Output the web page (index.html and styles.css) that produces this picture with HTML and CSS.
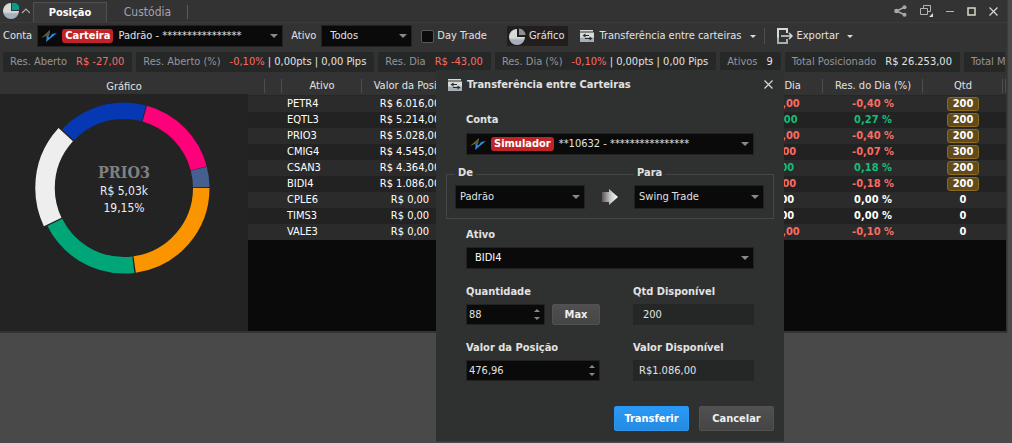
FILE: index.html
```
<!DOCTYPE html>
<html lang="pt-BR">
<head>
<meta charset="utf-8">
<title>Posição</title>
<link rel="stylesheet" href="styles.css">
</head>
<body>
<svg class="defs" aria-hidden="true">
  <defs>
    <linearGradient id="silver" x1="0" y1="0" x2="0" y2="1">
      <stop offset="0.55" stop-color="#d5dcd6"/><stop offset="0.7" stop-color="#a4afba"/>
    </linearGradient>
    <linearGradient id="fade" x1="0" y1="0" x2="1" y2="0">
      <stop offset="0" stop-color="#5a545a"/><stop offset="0.5" stop-color="#c4c4c4"/><stop offset="1" stop-color="#ffffff"/>
    </linearGradient>
    <symbol id="transfer" viewBox="0 0 14 12">
      <path d="M0 0h13v1.500H0zM0 2.500h14V12H0z" fill="url(#silver)"/>
      <path d="M4 5.500h5M5 8.500h6" fill="none" stroke="#2a2a2a" stroke-width="1.200"/>
      <path d="M2.500 5.500L5.500 3.500v4zM12.500 8.500L9.500 6.500v4z" fill="#2a2a2a"/>
    </symbol>
    <symbol id="brand" viewBox="0 0 16 12">
      <path d="M0 8L9 0L8 6L5 6z" fill="#75621f"/>
      <path d="M9 0L8 6L6 9L5 5z" fill="#4b5c55"/>
      <path d="M5 12L6 6L8.500 7.500L11 4L16 3z" fill="#2c8be8"/>
    </symbol>
    <symbol id="close" viewBox="0 0 9 9">
      <path d="M0.500 0.500L8.500 8.500M8.500 0.500L0.500 8.500" stroke="#d4d9d0" stroke-width="1.200" fill="none"/>
    </symbol>
  </defs>
</svg>

<main class="window">
  <header class="titlebar">
    <button class="app" aria-label="Menu">
      <svg width="27" height="18" viewBox="0 0 27 18"><path d="M8 1A8 8 0 1 0 16 9H8z" fill="url(#silver)"/><path d="M9 1H13L16 4V8H9z" fill="#0a9c88"/><path d="M19 11l4-4 4 4" fill="none" stroke="#aaa" stroke-width="1.200"/></svg>
    </button>
    <nav class="tabs">
      <button class="tab active">Posição</button>
      <button class="tab">Custódia</button>
    </nav>
    <div class="controls">
      <button aria-label="Compartilhar"><svg width="13" height="12" viewBox="0 0 13 12"><path d="M11 2L2.500 6L11 10" fill="none" stroke="#a7a7a7" stroke-width="1.500"/><g fill="#a7a7a7"><circle cx="2.500" cy="6" r="2.300"/><circle cx="10.500" cy="2.300" r="2"/><circle cx="10.500" cy="9.700" r="2"/></g></svg></button>
      <button aria-label="Duplicar"><svg width="13" height="12" viewBox="0 0 13 12"><path d="M3.500 3V.5h7v6H8M.5 3.500h7v6h-7z" fill="none" stroke="#b0b4b4"/><path d="M13 8v4H9z" fill="#ddd"/></svg></button>
      <button aria-label="Minimizar"><svg width="8" height="9" viewBox="0 0 8 9"><path d="M0 4.500h8" stroke="#b0b4b0"/></svg></button>
      <button aria-label="Maximizar"><svg width="9" height="9" viewBox="0 0 9 9"><path d="M1 1h7v7H1z" fill="none" stroke="#d4dccc" stroke-width="1.500"/></svg></button>
      <button aria-label="Fechar"><svg width="9" height="9"><use href="#close"/></svg></button>
    </div>
  </header>

  <div class="toolbar">
    <span id="acct">Conta</span>
    <button class="picker main-picker" aria-haspopup="listbox" aria-labelledby="acct">
      <svg width="16" height="12"><use href="#brand"/></svg>
      <span class="pill">Carteira</span><span>Padrão - ****************</span>
    </button>
    <label for="asset-filter">Ativo</label>
    <span class="select filter"><select id="asset-filter"><option>Todos</option></select></span>
    <label class="check"><input type="checkbox">Day Trade</label>
    <button class="tool pressed"><svg width="17" height="17" viewBox="0 0 17 17"><path d="M8 1A8 8 0 1 0 16 9H8z" fill="url(#silver)"/><path d="M10 0.500A7 7 0 0 1 16.500 7H10z" fill="#8f8f93"/></svg>Gráfico</button>
    <button class="tool move"><svg width="14" height="12"><use href="#transfer"/></svg>Transferência entre carteiras<i class="caret"></i></button>
    <button class="tool export"><svg width="16" height="16" viewBox="0 0 16 16"><path d="M10 5V1H1v14h9v-4" fill="none" stroke="url(#silver)" stroke-width="2"/><path d="M4 8h11M12 5l3 3-3 3" fill="none" stroke="#d5dcd6" stroke-width="1.500"/></svg>Exportar<i class="caret"></i></button>
  </div>

  <section class="cards">
    <div class="card"><span>Res. Aberto</span><b class="neg">R$ -27,00</b></div>
    <div class="card"><span>Res. Aberto (%)</span><b><em class="neg">-0,10%</em> | 0,00pts | 0,00 Pips</b></div>
    <div class="card"><span>Res. Dia</span><b class="neg">R$ -43,00</b></div>
    <div class="card"><span>Res. Dia (%)</span><b><em class="neg">-0,10%</em> | 0,00pts | 0,00 Pips</b></div>
    <div class="card"><span>Ativos</span><b>9</b></div>
    <div class="card"><span>Total Posicionado</span><b>R$ 26.253,00</b></div>
    <div class="card last"><span>Total M</span></div>
  </section>

  <div class="content">
    <section class="chart">
      <h2>Gráfico</h2>
      <div class="plot">
        <svg width="248" height="190" viewBox="0 0 248 190" role="img" aria-label="Distribuição da carteira">
          <g fill="none" stroke-width="16.500" transform="translate(124 94)">
            <circle r="77.250" pathLength="360" stroke="#fa9500" stroke-dasharray="82 278" stroke-dashoffset="0"/>
            <circle r="77.250" pathLength="360" stroke="#00a578" stroke-dasharray="70.500 289.500" stroke-dashoffset="-83"/>
            <circle r="79" pathLength="360" stroke="#eee" stroke-width="19.500" stroke-dasharray="68 292" stroke-dashoffset="-154.500"/>
            <circle r="77.250" pathLength="360" stroke="#0638b4" stroke-dasharray="61.500 298.500" stroke-dashoffset="-223.500"/>
            <circle r="77.250" pathLength="360" stroke="#ff007a" stroke-dasharray="59.500 300.500" stroke-dashoffset="-285.700"/>
            <circle r="77.250" pathLength="360" stroke="#456090" stroke-dasharray="13.800 346.200" stroke-dashoffset="-345.500"/>
          </g>
          <g text-anchor="middle">
            <text class="ticker" x="124" y="84">PRIO3</text>
            <text class="stat" x="124" y="101">R$ 5,03k</text>
            <text class="stat" x="124" y="118">19,15%</text>
          </g>
        </svg>
      </div>
    </section>
    <div class="grid">
      <table>
        <colgroup><col class="w-mark"><col class="w-mark"><col class="w-asset"><col class="w-value"><col><col class="w-value"><col class="w-value"><col class="w-qty"><col class="w-end"></colgroup>
        <thead><tr><th></th><th></th><th>Ativo</th><th>Valor da Posição</th><th></th><th>Res. do Dia</th><th>Res. do Dia (%)</th><th>Qtd</th><th></th></tr></thead>
        <tbody>
          <tr><td></td><td></td><td>PETR4</td><td>R$ 6.016,00</td><td></td><td class="neg">R$ -24,00</td><td class="neg">-0,40 %</td><td><mark>200</mark></td><td></td></tr>
          <tr><td></td><td></td><td>EQTL3</td><td>R$ 5.214,00</td><td></td><td class="pos">R$ 14,00</td><td class="pos">0,27 %</td><td><mark>200</mark></td><td></td></tr>
          <tr><td></td><td></td><td>PRIO3</td><td>R$ 5.028,00</td><td></td><td class="neg">R$ -20,00</td><td class="neg">-0,40 %</td><td><mark>200</mark></td><td></td></tr>
          <tr><td></td><td></td><td>CMIG4</td><td>R$ 4.545,00</td><td></td><td class="neg">R$ -3,00</td><td class="neg">-0,07 %</td><td><mark>300</mark></td><td></td></tr>
          <tr><td></td><td></td><td>CSAN3</td><td>R$ 4.364,00</td><td></td><td class="pos">R$ 8,00</td><td class="pos">0,18 %</td><td><mark>200</mark></td><td></td></tr>
          <tr><td></td><td></td><td>BIDI4</td><td>R$ 1.086,00</td><td></td><td class="neg">R$ -2,00</td><td class="neg">-0,18 %</td><td><mark>200</mark></td><td></td></tr>
          <tr><td></td><td></td><td>CPLE6</td><td>R$ 0,00</td><td></td><td>R$ 0,00</td><td>0,00 %</td><td>0</td><td></td></tr>
          <tr><td></td><td></td><td>TIMS3</td><td>R$ 0,00</td><td></td><td>R$ 0,00</td><td>0,00 %</td><td>0</td><td></td></tr>
          <tr><td></td><td></td><td>VALE3</td><td>R$ 0,00</td><td></td><td class="neg">R$ -26,00</td><td class="neg">-0,10 %</td><td>0</td><td></td></tr>
        </tbody>
      </table>
    </div>
  </div>
</main>

<form class="dialog" role="dialog" aria-labelledby="dialog-title">
  <header>
    <svg width="14" height="12"><use href="#transfer"/></svg>
    <h1 id="dialog-title">Transferência entre Carteiras</h1>
    <button type="button" aria-label="Fechar"><svg width="9" height="9"><use href="#close"/></svg></button>
  </header>
  <div class="field account">
    <span class="label" id="dialog-acct">Conta</span>
    <button type="button" class="picker" aria-haspopup="listbox" aria-labelledby="dialog-acct">
      <svg width="16" height="12"><use href="#brand"/></svg>
      <span class="pill">Simulador</span><span>**10632 - ****************</span>
    </button>
  </div>
  <div class="route">
    <div class="end"><label for="from">De</label><span class="select"><select id="from"><option>Padrão</option></select></span></div>
    <svg width="16" height="16" viewBox="0 0 16 16"><path d="M0 3h7V0l9 8-9 8v-3H0z" fill="url(#fade)"/></svg>
    <div class="end"><label for="to">Para</label><span class="select"><select id="to"><option>Swing Trade</option></select></span></div>
  </div>
  <div class="field asset">
    <label for="asset">Ativo</label>
    <span class="select"><select id="asset"><option>BIDI4</option></select></span>
  </div>
  <div class="pair">
    <div class="field">
      <label for="qty">Quantidade</label>
      <div class="row">
        <span class="spin"><input id="qty" type="text" inputmode="numeric" value="88"><span class="steps"><button type="button" class="up" aria-label="Aumentar"></button><button type="button" class="down" aria-label="Diminuir"></button></span></span>
        <button type="button" class="btn max">Max</button>
      </div>
    </div>
    <div class="field"><label for="qty-free">Qtd Disponível</label><input class="readout inset" id="qty-free" type="text" readonly value="200"></div>
    <div class="field">
      <label for="val">Valor da Posição</label>
      <span class="spin"><input id="val" type="text" inputmode="decimal" value="476,96"><span class="steps"><button type="button" class="up" aria-label="Aumentar"></button><button type="button" class="down" aria-label="Diminuir"></button></span></span>
    </div>
    <div class="field"><label for="val-free">Valor Disponível</label><input class="readout" id="val-free" type="text" readonly value="R$1.086,00"></div>
  </div>
  <footer>
    <button type="button" class="btn primary">Transferir</button>
    <button type="button" class="btn">Cancelar</button>
  </footer>
</form>
</body>
</html>
```
FILE: styles.css
```
* { box-sizing: border-box; }
body {
  margin: 0;
  min-height: 100vh;
  background: #494949;
  color: #e2e2e2;
  font: 11px/14px "DejaVu Sans Condensed", "Noto Sans", sans-serif;
  overflow: hidden;
}
button, input, select { font: inherit; color: inherit; margin: 0; }
button { border: 0; background: none; padding: 0; }
svg { display: block; flex: none; }
.defs { position: absolute; width: 0; height: 0; }
.neg { color: #fb6b62; }
.pos { color: #17bd78; }

.window {
  margin-right: 4px;
  padding-bottom: 2px;
  background: #333;
  border-right: 1px solid #3d3d3d;
  white-space: nowrap;
}

.titlebar { display: flex; align-items: center; height: 23px; border-bottom: 1px solid #3c3c3c; }
.app { margin: 0 3px; }
.tabs { display: flex; align-self: flex-end; }
.tab { height: 20px; width: 81px; color: #a5a1a8; font-size: 12px; }
.tab.active {
  width: 74px;
  border: 1px solid #505050;
  border-bottom: 0;
  background: #3a3a3a;
  color: #fff;
  font-size: 11px;
  font-weight: bold;
}
.tab:last-child { background: linear-gradient(#5c5c5c, #5c5c5c) right center / 1px 14px no-repeat; }
.controls { display: flex; align-items: center; gap: 13px; margin-left: auto; padding-right: 9px; }

.toolbar { display: flex; align-items: center; height: 26px; padding-left: 3px; }
.picker {
  display: flex;
  align-items: center;
  gap: 5px;
  height: 22px;
  width: 100%;
  padding: 0 4px 0 3px;
  background: #0a0a0a;
  border: 1px solid #222;
}
.picker::after, .select::after {
  content: "";
  border: 4px solid transparent;
  border-top-color: #8b8888;
  border-bottom: 0;
  margin-left: auto;
  pointer-events: none;
}
.main-picker { width: 246px; margin: 0 8px 0 5px; }
.pill { padding: 0 3px; border-radius: 3px; background: #c02428; color: #fff; font-weight: bold; }
.select {
  display: grid;
  align-items: center;
  height: 22px;
  background: #0a0a0a;
  border: 1px solid #222;
}
.select select {
  grid-area: 1 / 1;
  width: 100%;
  height: 20px;
  padding: 0 20px 0 4px;
  border: 0;
  background: none;
  appearance: none;
}
.select::after { grid-area: 1 / 1; justify-self: end; margin-right: 4px; }
.filter { width: 91px; margin: 0 9px 0 5px; }
.filter select { padding-left: 8px; }
.check { display: flex; align-items: center; gap: 3px; }
.check input {
  appearance: none;
  width: 13px;
  height: 13px;
  margin: 0;
  border: 1px solid #5a585c;
  border-radius: 2px;
  background: #0d0c0d;
}
.tool { display: flex; align-items: center; gap: 4px; height: 20px; }
.pressed { margin-left: 20px; padding: 0 4px 0 2px; background: #211e1d; gap: 3px; }
.move { margin-left: 12px; padding-right: 8px; border-right: 1px solid #4e4e4e; gap: 5px; height: 16px; }
.export { margin-left: 12px; }
.move .caret { margin-left: 3px; }
.caret { border: 3px solid transparent; border-top-color: #ddd; border-bottom: 0; margin-left: 4px; }

.cards { display: flex; gap: 4px; margin: 3px 2px 0 3px; overflow: hidden; }
.card { display: flex; flex: none; gap: 9px; height: 20px; padding: 0 8px 0 7px; line-height: 20px; background: #262827; border-radius: 2px; }
.last { flex: 1 0 0; padding-right: 0; }
.card span { color: #97939a; }
.card b, .card em { font-weight: normal; font-style: normal; }

.content { display: grid; grid-template-columns: 248px 1fr; margin-right: 1px; padding-top: 6px; }
.chart h2 { margin: 0; height: 16px; font: inherit; line-height: 17px; text-align: center; }
.plot { height: 237px; background: #232323; }
.ticker { font: bold 16px "DejaVu Serif Condensed", "DejaVu Serif", "Noto Serif", serif; fill: #808080; }
.stat { font-size: 12px; fill: #eee; }
.grid { background: #0a0a0a; overflow: hidden; }
table { width: 100%; table-layout: fixed; border-collapse: collapse; }
th, td { height: 16px; padding: 0; text-align: center; overflow: hidden; }
th {
  height: 17px;
  line-height: 16px;
  background: linear-gradient(#4d4d4d, #4d4d4d) right center / 1px 14px no-repeat #333;
  border-bottom: 1px solid #272727;
  font-weight: normal;
}
th:nth-child(4) { padding-left: 4px; }
tbody tr { background: #2b2b2b; color: #fff; }
tbody tr:nth-child(even) { background: #222; }
td { line-height: 16px; }
td:nth-child(3) { text-align: left; padding-left: 5px; }
td:nth-child(n+6) { font-weight: bold; }
td:nth-child(4) { padding-right: 4px; }
.w-mark { width: 17px; }
.w-asset { width: 80px; }
.w-value { width: 100px; }
.w-qty { width: 80px; }
.w-end { width: 3px; }
mark {
  display: block;
  width: 32px;
  height: 14px;
  margin: 0 auto;
  line-height: 12px;
  border: 1px solid #8f691f;
  border-radius: 3px;
  background: #614a1d;
  color: #fff;
}

.dialog {
  position: absolute;
  top: 70px;
  left: 436px;
  width: 348px;
  padding: 0 10px 10px;
  background: #2f3130;
  border-bottom: 1px solid #3c3c3c;
}
.dialog header { display: flex; align-items: center; gap: 5px; height: 29px; padding: 0 1px 0 2px; }
.dialog header button { margin-left: auto; }
.dialog h1 { margin: 0; font: inherit; font-weight: bold; }
.dialog label, .label { font-weight: bold; }
.field { display: flex; flex-direction: column; gap: 5px; }
.account { margin: 14px 20px 19px; gap: 6px; }
.route {
  display: flex;
  justify-content: space-between;
  align-items: center;
  height: 45px;
  padding: 0 9px 0 8px;
  border: 1px solid #454746;
}
.end { display: flex; flex-direction: column; align-items: flex-start; gap: 5px; width: 130px; margin-top: -18px; }
.end label { padding: 0 3px; background: #2f3130; }
.end .select { width: 100%; height: 24px; }
.asset { margin: 9px 20px 16px; }
.asset select { padding-left: 8px; color: #fff; }
.pair { display: grid; grid-template-columns: 134px 121px; justify-content: space-between; gap: 16px 32px; margin: 0 20px; }
.row { display: flex; gap: 7px; }
.row .spin { flex: 1; min-width: 0; }
.spin { display: flex; height: 21px; background: #0a0a0a; border: 1px solid #222; }
.spin input { flex: 1; width: 100%; min-width: 0; padding: 0 2px; border: 0; background: none; }
.steps { display: flex; flex-direction: column; justify-content: space-evenly; padding: 0 4px; }
.up, .down { border: 3px solid transparent; }
.up { border-top: 0; border-bottom-color: #8b8888; }
.down { border-bottom: 0; border-top-color: #8b8888; }
.readout { width: 100%; height: 21px; padding: 0 6px; border: 0; background: #252726; }
.inset { padding-left: 10px; }
.btn {
  flex: none;
  width: 75px;
  height: 25px;
  border: 1px solid #525252;
  border-radius: 2px;
  background: linear-gradient(#505050, #454545);
  color: #eee;
  font-weight: bold;
}
.max { width: 48px; height: 21px; }
.primary { border-color: #2a96f2; background: linear-gradient(#2999f8, #268ae0); color: #fff; }
.dialog footer { display: flex; justify-content: flex-end; gap: 10px; margin-top: 25px; }
```
